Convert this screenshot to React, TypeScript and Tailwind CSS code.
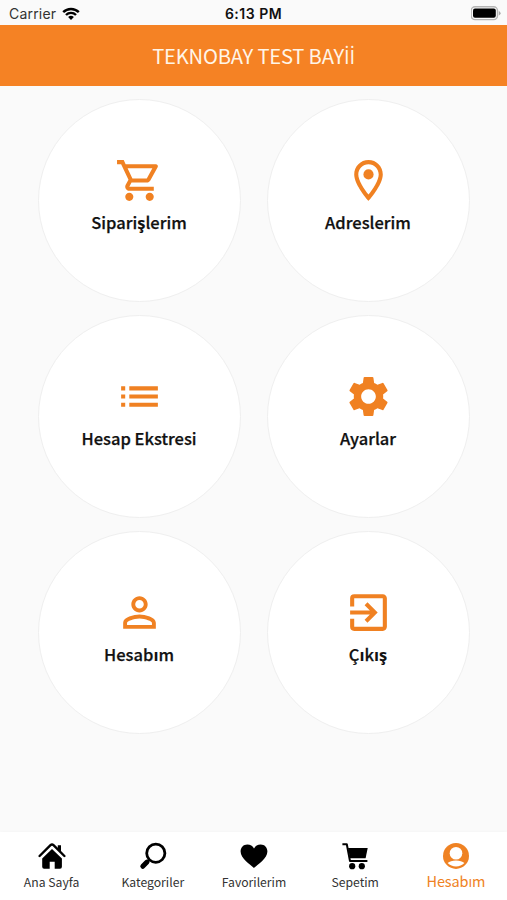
import type { ReactNode } from "react";
import {
  MdExitToApp,
  MdList,
  MdOutlineLocationOn,
  MdOutlineShoppingCart,
  MdPersonOutline,
  MdSettings,
} from "react-icons/md";

const tiles: { label: string; icon: ReactNode }[] = [
  { label: "Siparişlerim", icon: <MdOutlineShoppingCart /> },
  { label: "Adreslerim", icon: <MdOutlineLocationOn /> },
  { label: "Hesap Ekstresi", icon: <MdList /> },
  { label: "Ayarlar", icon: <MdSettings /> },
  { label: "Hesabım", icon: <MdPersonOutline /> },
  { label: "Çıkış", icon: <MdExitToApp /> },
];

// The CJK family has no ı, ş or İ, so those letters are set in Open Sans.
function Turkish({ text, strong = false }: { text: string; strong?: boolean }) {
  return (
    <span>
      {text.split(/([ışİ])/).map((part, i) =>
        i % 2 ? (
          <span
            key={i}
            className={
              strong
                ? "font-['Open_Sans',sans-serif] leading-none font-bold [-webkit-text-stroke:0px]"
                : "font-['Open_Sans',sans-serif] leading-none"
            }
          >
            {part}
          </span>
        ) : (
          part
        ),
      )}
    </span>
  );
}

function HomeIcon() {
  return (
    <svg viewBox="0 0 28 28" className="size-7">
      <path d="M1.6 14 12.5 3.2q1.5-1.4 3 0L26.4 14" fill="none" stroke="black" strokeWidth="2.4" strokeLinecap="round" strokeLinejoin="round" />
      <path d="M19.8 3.2h3.2v6.5l-3.2-3.2zM4.2 16.4 14 6.9l9.9 9.5v8.4q0 1.9-1.9 1.9h-5.3v-7h-5v7H6.1q-1.9 0-1.9-1.9z" />
    </svg>
  );
}

function SearchIcon() {
  return (
    <svg viewBox="0 0 28 28" className="size-7">
      <circle cx="16.8" cy="11.2" r="9.1" fill="none" stroke="black" strokeWidth="2.8" />
      <path d="m10.1 17.9-1.6 1.7" stroke="black" strokeWidth="2.6" />
      <path d="m8 20.1-4.2 4.2" stroke="black" strokeWidth="5" strokeLinecap="round" />
    </svg>
  );
}

function HeartIcon() {
  return (
    <svg viewBox="0 0 28 28" className="size-7">
      <path d="M14 26C10 22.4.6 16.7.6 9.6.6 5.4 3.5 2.6 7.3 2.6c3.1 0 5.4 1.6 6.7 3.8 1.3-2.2 3.6-3.8 6.7-3.8 3.8 0 6.7 2.8 6.7 7 0 7.1-9.4 12.8-13.4 16.4z" />
    </svg>
  );
}

function CartIcon() {
  return (
    <svg viewBox="0 0 28 28" className="size-7">
      <path d="M1.4 2.2h4.4l3.2 16.9h17.4" fill="none" stroke="black" strokeWidth="2" strokeLinejoin="round" />
      <path d="M7 6.1h19.7l-2.1 10.1H9z" />
      <circle cx="11.2" cy="24.2" r="3.1" />
      <circle cx="20.8" cy="24.2" r="3.1" />
    </svg>
  );
}

function AccountIcon() {
  return (
    <svg viewBox="0 0 28 28" className="size-7">
      <circle cx="14" cy="13.9" r="13" fill="#ef8223" />
      <circle cx="14" cy="11.2" r="6.3" fill="white" />
      <path d="M5.6 21q2.8-2.5 8.4-2.5t8.4 2.5q-3.5 3.4-8.4 3.4T5.6 21z" fill="white" />
    </svg>
  );
}

const tabs = [
  { label: "Ana Sayfa", icon: <HomeIcon /> },
  { label: "Kategoriler", icon: <SearchIcon /> },
  { label: "Favorilerim", icon: <HeartIcon /> },
  { label: "Sepetim", icon: <CartIcon /> },
  { label: "Hesabım", icon: <AccountIcon />, active: true },
];

export default function App() {
  return (
    <div className="flex h-[900px] w-[507px] flex-col overflow-hidden bg-[#fafafa] font-['Noto_Sans_CJK_SC',sans-serif] text-[#111]">
      <div className="grid h-[25px] shrink-0 grid-cols-3 items-center pt-[2px] pr-[6px] pl-[9px] font-['Inter',sans-serif] text-[14px]">
        <div className="flex items-center gap-[6px]">
          <span className="tracking-[0.2px] text-[#333]">Carrier</span>
          <svg viewBox="0 0 18 14" className="h-[14px] w-[18px]">
            <path d="M1.2 5.2a11 11 0 0 1 15.6 0M4 8a7 7 0 0 1 10 0" fill="none" stroke="black" strokeWidth="2.4" />
            <path d="m9 13-2.9-2.9q2.9-2.5 5.8 0z" />
          </svg>
        </div>
        <span className="pr-[3px] text-center font-semibold tracking-[0.5px]">6:13 PM</span>
        <svg viewBox="0 0 30 15" className="h-[15px] w-[30px] justify-self-end">
          <rect x=".2" y=".8" width="26.3" height="12.8" rx="3.8" fill="none" stroke="#b5b5b5" strokeWidth="1.4" />
          <rect x="2" y="2.6" width="22.8" height="9.2" rx="2" />
          <path d="M27.8 5v4.5q1.8-.6 1.8-2.2T27.8 5z" fill="#aaa" />
        </svg>
      </div>

      <header className="flex h-[61px] shrink-0 items-center justify-center bg-[#f58224] pt-px text-[20.2px] tracking-[-0.2px] text-[#fff5e8]">
        <Turkish text="TEKNOBAY TEST BAYİİ" />
      </header>

      <main className="grid grow grid-cols-[203px_203px] content-start justify-center gap-x-[26px] gap-y-[13px] pt-[13px]">
        {tiles.map((tile) => (
          <div key={tile.label} className="flex h-[203px] flex-col items-center rounded-full border border-[#efefef] bg-white pt-[56px]">
            <div className="text-[49px] text-[#f08122]">{tile.icon}</div>
            <div className="mt-[4px] h-[26px] text-[16.5px] leading-[26px] font-medium whitespace-nowrap [-webkit-text-stroke:0.25px_#111]">
              <Turkish text={tile.label} strong />
            </div>
          </div>
        ))}
      </main>

      <nav className="grid h-[68px] shrink-0 grid-cols-5 bg-white pt-[10px] pl-px shadow-[0_-1px_3px_rgba(0,0,0,0.02)]">
        {tabs.map((tab) => (
          <div key={tab.label} className="flex flex-col items-center">
            {tab.icon}
            <div className={tab.active ? "pr-px text-[14.5px] leading-[22px] tracking-[-0.1px] text-[#ef8223]" : "mt-[2px] text-[12.2px] leading-[20px] text-[#333]"}>
              <Turkish text={tab.label} />
            </div>
          </div>
        ))}
      </nav>
    </div>
  );
}
